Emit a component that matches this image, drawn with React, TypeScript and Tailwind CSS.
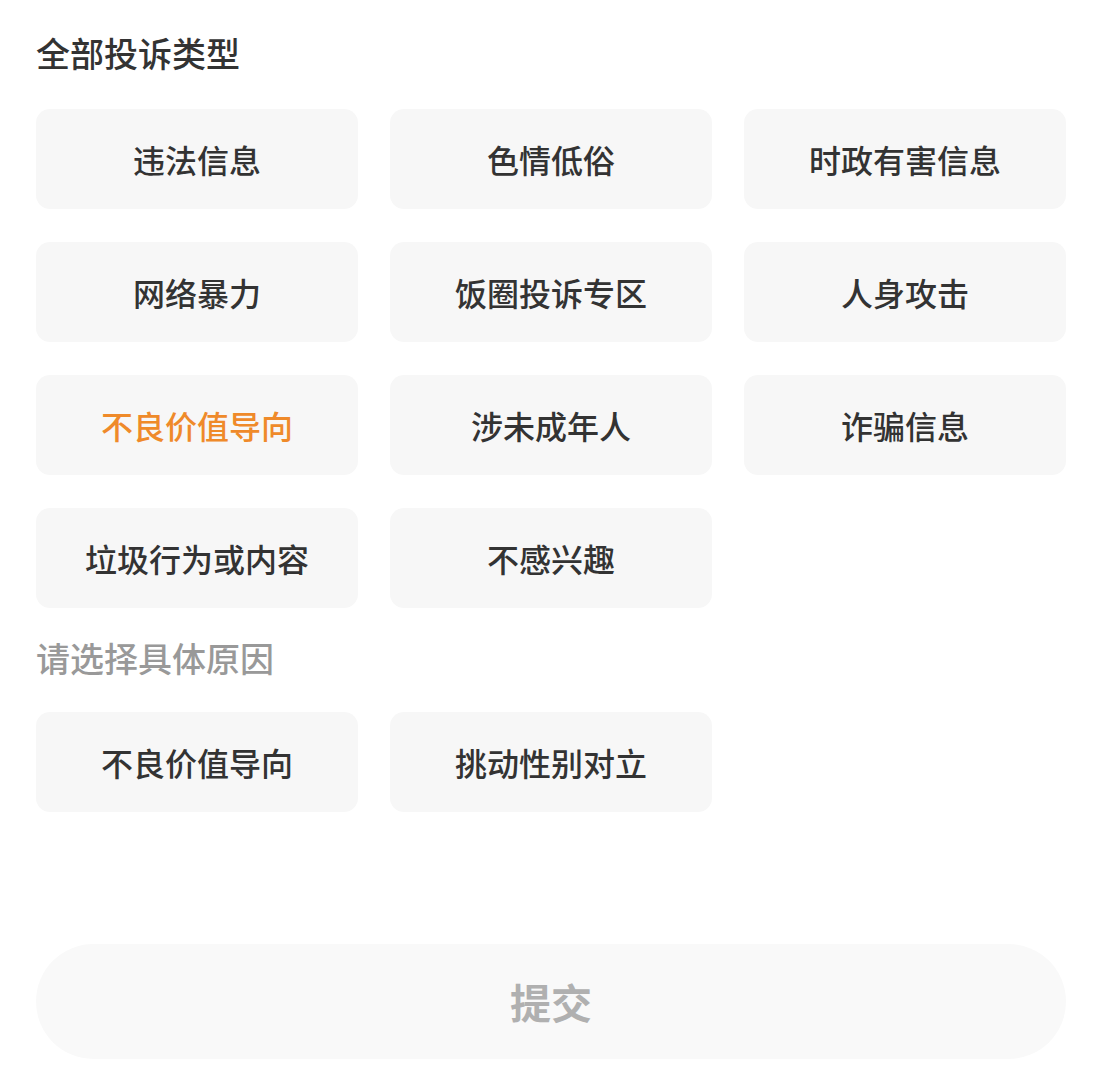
const types = [
  "违法信息",
  "色情低俗",
  "时政有害信息",
  "网络暴力",
  "饭圈投诉专区",
  "人身攻击",
  "不良价值导向",
  "涉未成年人",
  "诈骗信息",
  "垃圾行为或内容",
  "不感兴趣",
];

const reasons = ["不良价值导向", "挑动性别对立"];

function Option({ label, active }: { label: string; active?: boolean }) {
  return (
    <button
      type="button"
      className={`flex h-[100px] items-center justify-center rounded-[14px] bg-[#f7f7f7] text-[32px] font-medium ${
        active ? "text-[#ef8a2a]" : "text-[#333333]"
      }`}
    >
      {label}
    </button>
  );
}

export default function App() {
  return (
    <main
      className="min-h-screen bg-white px-[36px] pt-[33px]"
      style={{ fontFamily: '"Noto Sans CJK SC", "Noto Sans", sans-serif' }}
    >
      <h2 className="text-[34px] font-medium leading-[40px] text-[#333333]">
        全部投诉类型
      </h2>
      <div className="mt-[36px] grid grid-cols-3 gap-x-[32px] gap-y-[33px]">
        {types.map((t) => (
          <Option key={t} label={t} active={t === "不良价值导向"} />
        ))}
      </div>
      <h2 className="mt-[30px] text-[34px] font-medium leading-[40px] text-[#999999]">
        请选择具体原因
      </h2>
      <div className="mt-[34px] grid grid-cols-3 gap-x-[32px] gap-y-[33px]">
        {reasons.map((r) => (
          <Option key={r} label={r} />
        ))}
      </div>
      <button
        type="button"
        className="mt-[132px] flex h-[115px] w-full items-center justify-center rounded-full bg-[#f9f9f9] text-[41px] font-bold text-[#b0b0b0]"
      >
        提交
      </button>
    </main>
  );
}
